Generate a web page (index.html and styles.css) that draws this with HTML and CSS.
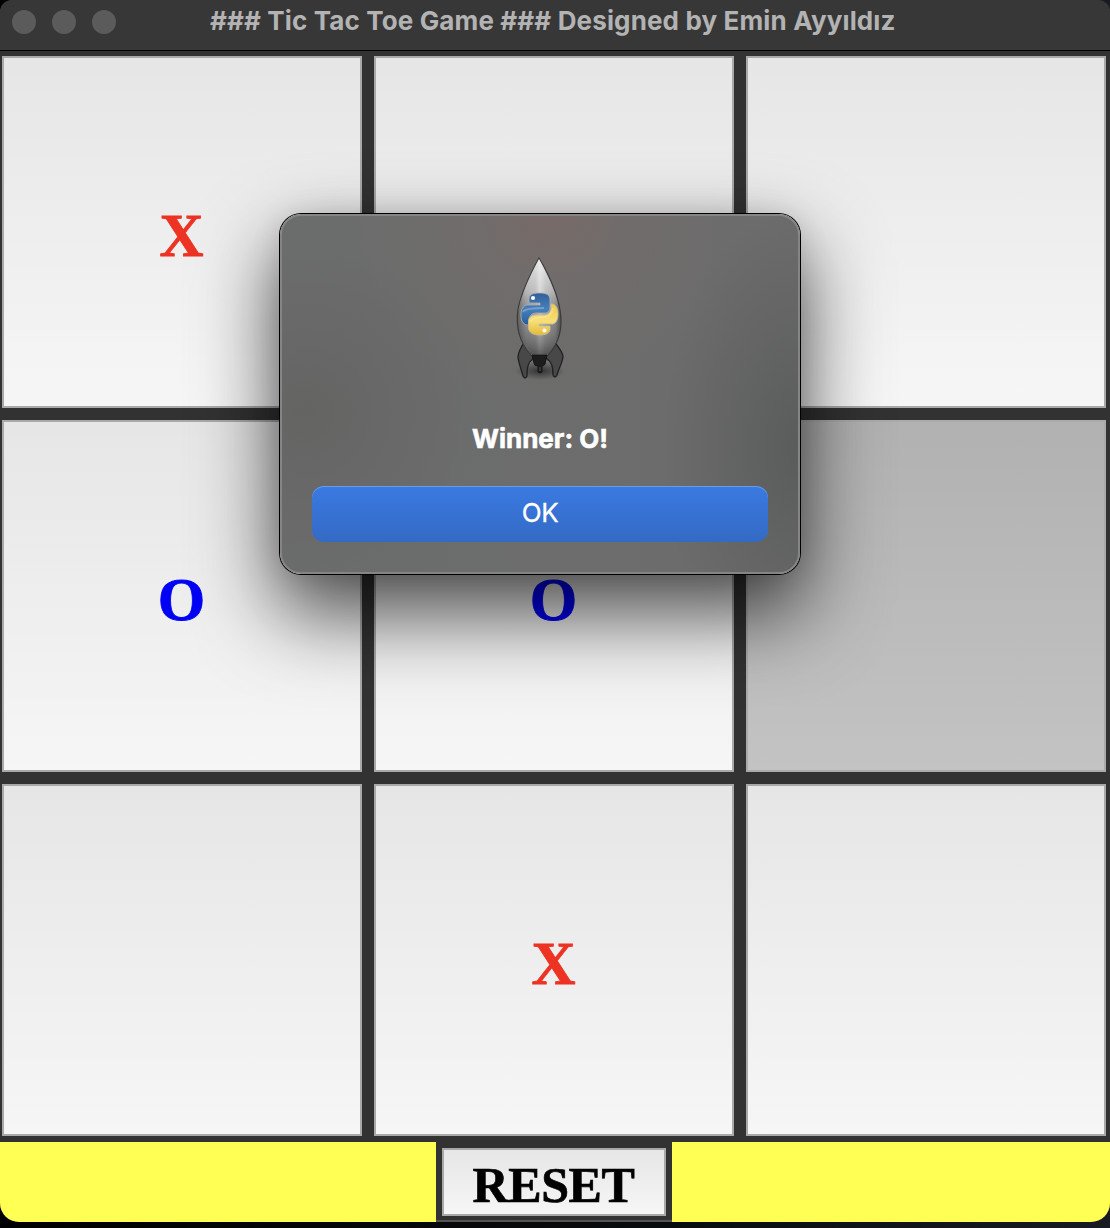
FILE: index.html
```html
<!DOCTYPE html>
<html lang="en">
<head>
<meta charset="utf-8">
<title>Tic Tac Toe Game</title>
<link rel="stylesheet" href="styles.css">
</head>
<body>
<main class="window">
  <header class="titlebar">
    <div class="controls"><i></i><i></i><i></i></div>
    <h1 class="title">### Tic Tac Toe Game ### Designed by Emin Ayyıldız</h1>
  </header>
  <section class="board">
    <button class="cell x">X</button><button class="cell"></button><button class="cell"></button>
    <button class="cell o">O</button><button class="cell o">O</button><button class="cell pressed"></button>
    <button class="cell"></button><button class="cell x">X</button><button class="cell"></button>
  </section>
  <footer class="footer">
    <div class="reset-frame"><button class="reset">RESET</button></div>
  </footer>
</main>
<div class="dialog" role="dialog">
  <svg class="rocket" width="60" height="130" viewBox="0 0 60 130">
    <defs>
      <linearGradient id="body" x1="0" x2="1" y1="0" y2="0">
        <stop offset="0" stop-color="#5a5a5a"/><stop offset=".2" stop-color="#929292"/><stop offset=".42" stop-color="#a2a2a2"/><stop offset=".52" stop-color="#c5c5c5"/><stop offset=".65" stop-color="#a2a2a2"/><stop offset=".87" stop-color="#888"/><stop offset="1" stop-color="#4b4b4b"/>
      </linearGradient>
      <linearGradient id="shade" x1="0" x2="0" y1="0" y2="1">
        <stop offset="0" stop-color="#fff" stop-opacity=".7"/><stop offset=".35" stop-color="#fff" stop-opacity=".32"/><stop offset=".6" stop-color="#777" stop-opacity=".1"/><stop offset="1" stop-color="#222" stop-opacity=".6"/>
      </linearGradient>
      <linearGradient id="blue" x1="0" x2="0" y1="0" y2="1"><stop offset="0" stop-color="#315f9b"/><stop offset=".5" stop-color="#4680bb"/><stop offset="1" stop-color="#285c9c"/></linearGradient>
      <linearGradient id="yellow" x1="0" x2="0" y1="0" y2="1"><stop offset="0" stop-color="#efc847"/><stop offset=".55" stop-color="#f8df75"/><stop offset="1" stop-color="#e5b936"/></linearGradient>
      <radialGradient id="ground"><stop offset="0" stop-color="#181818" stop-opacity=".7"/><stop offset="1" stop-color="#222" stop-opacity="0"/></radialGradient>
    </defs>
    <ellipse cx="30" cy="115" rx="25" ry="9" fill="url(#ground)"/>
    <path d="M15 85C11 91 8 96 8 101C9 109 12 115 13 120Q15 124 17 120C17 111 18 106 24 102L27 94ZM44 85C48 91 53 96 53 101C52 108 48 114 47 119Q45 123 43 119C43 111 42 106 36 102L32 94Z" fill="#484848" stroke="#202020" stroke-width="1.3"/>
    <path d="M29 2C23 13 12 34 8 53C5 74 11 88 21 99H38C49 87 53 71 50 54C47 35 36 14 29 2Z" fill="url(#body)" stroke="#3b3b3b" stroke-width="1.2"/>
    <path d="M29 3C23 14 12 35 8.5 53C6 74 12 87 21 98H38C48 87 52 71 49.5 54C46 35 35 14 29 3Z" fill="url(#shade)"/>
    <path d="M22 99H37L35 108Q34 110 32 110V116Q30 118 28 116V110Q24 110 24 107Z" fill="#1d1d1d" stroke="#151515"/>
    <path d="M30 111V115" stroke="#555" stroke-width="1"/>
    <path d="M29.5 37C22 37 19 39 19 43.5V47H30V49H17C13 50 11 53 11 59C11 65 13 68 17 69H18.5V65C19 60 22 57 26 57H34C38 57 40 55 40 51V44C40 39 37 37 29.5 37Z" fill="url(#blue)" stroke="#b0b0b0" stroke-width=".8"/>
    <path d="M41 48V52C41 56 38 59 34 59H26C21 59 18.5 62 18.5 66V72C19 77 24 79 29 79C36 79 40 77 40 73V70H29V68H43C46 67 48 64 48 58C48 51 45 48 41 48Z" fill="url(#yellow)" stroke="#c4bfab" stroke-width=".8"/>
    <path d="M13 56Q15 52 34 52M21 65Q22 61 35 61Q42 60 43 52" fill="none" stroke="#fff" stroke-opacity=".25" stroke-width="2"/>
    <circle cx="23" cy="42" r="2.1" fill="#fff"/><circle cx="34.5" cy="74.5" r="2.1" fill="#fff"/>
  </svg>
  <p class="message">Winner: O!</p>
  <button class="ok">OK</button>
</div>
</body>
</html>
```
FILE: styles.css
```css
* { box-sizing: border-box; }
body { margin: 0; height: 1228px; background: linear-gradient(90deg, #000, #090c0e 60%, #191b22); overflow: hidden; position: relative; }
button { font: inherit; margin: 0; padding: 0; }
.window { height: 1222px; width: 1110px; background: #323232; border-radius: 12px 12px 19px 19px; overflow: hidden; }
.titlebar { height: 51px; background: #373737; border-bottom: 1px solid #000; display: flex; align-items: flex-start; padding-left: 12px; }
.controls { display: flex; gap: 16px; padding-top: 10px; }
.controls i { width: 24px; height: 24px; border-radius: 50%; background: #5b5b5b; }
.title { margin: 5px 0 0 94px; font: 700 26px/32px Inter, sans-serif; letter-spacing: .135px; color: #b3b3b3; white-space: nowrap; }
.board { display: grid; grid-template-columns: repeat(3, 360px); grid-template-rows: repeat(3, 352px); gap: 12px; padding: 5px 4px 6px 2px; }
.cell, .reset { border: 2px solid #a9a9a9; background: linear-gradient(#e6e6e6, #f6f6f6); font-family: "Liberation Serif", serif; font-weight: 700; }
.cell { font-size: 61px; line-height: 60px; padding: 8px 1px 0 0; -webkit-text-stroke: .8px currentColor; }
.x { color: #ed3323; }
.o { color: #0000f5; }
.pressed { background: linear-gradient(#b1b1b1, #c3c3c3); border-color: #aaa; }
.footer { height: 80px; background: #ffff54; display: flex; padding-left: 436px; }
.reset-frame { width: 236px; height: 80px; padding: 6px; background: #323232; border-bottom: 2px solid #555; }
.reset { display: block; width: 224px; height: 68px; font-size: 50px; line-height: 50px; letter-spacing: -.4px; color: #000; padding: 6px 1px 0 0; -webkit-text-stroke: .7px #000; }
.dialog { position: absolute; left: 280px; top: 214px; width: 520px; height: 360px; border-radius: 21px; border: 2px solid #848584; display: flex; flex-direction: column; align-items: center; background: radial-gradient(circle at 52% 0, rgba(124,105,102,.7) 0, rgba(120,108,106,.4) 70px, transparent 200px), radial-gradient(circle at 5% 55%, #646463, transparent 170px), radial-gradient(140px 240px at 100% 65%, #5a5c5b 0, transparent 100%), linear-gradient(90deg, #6b6d6c, #6c6c6c); background-origin: border-box; box-shadow: 0 0 0 1px #000, 0 36px 80px 4px rgba(0,0,0,.68), 0 0 30px rgba(0,0,0,.1); }
.rocket { margin-top: 40px; flex: none; }
.message { margin: 37px 0 0; font: 700 26px/32px Inter, sans-serif; color: #fff; -webkit-text-stroke: .6px #fff; }
.ok { width: 456px; height: 56px; margin-top: 31px; border: 0; border-radius: 12px; background: linear-gradient(#3b7ae2, #336ac4); box-shadow: inset 0 1px #6b9be8; color: #fff; font: 400 26px/30px Inter, sans-serif; letter-spacing: -.5px; padding-bottom: 2px; -webkit-text-stroke: .3px #fff; }
```
